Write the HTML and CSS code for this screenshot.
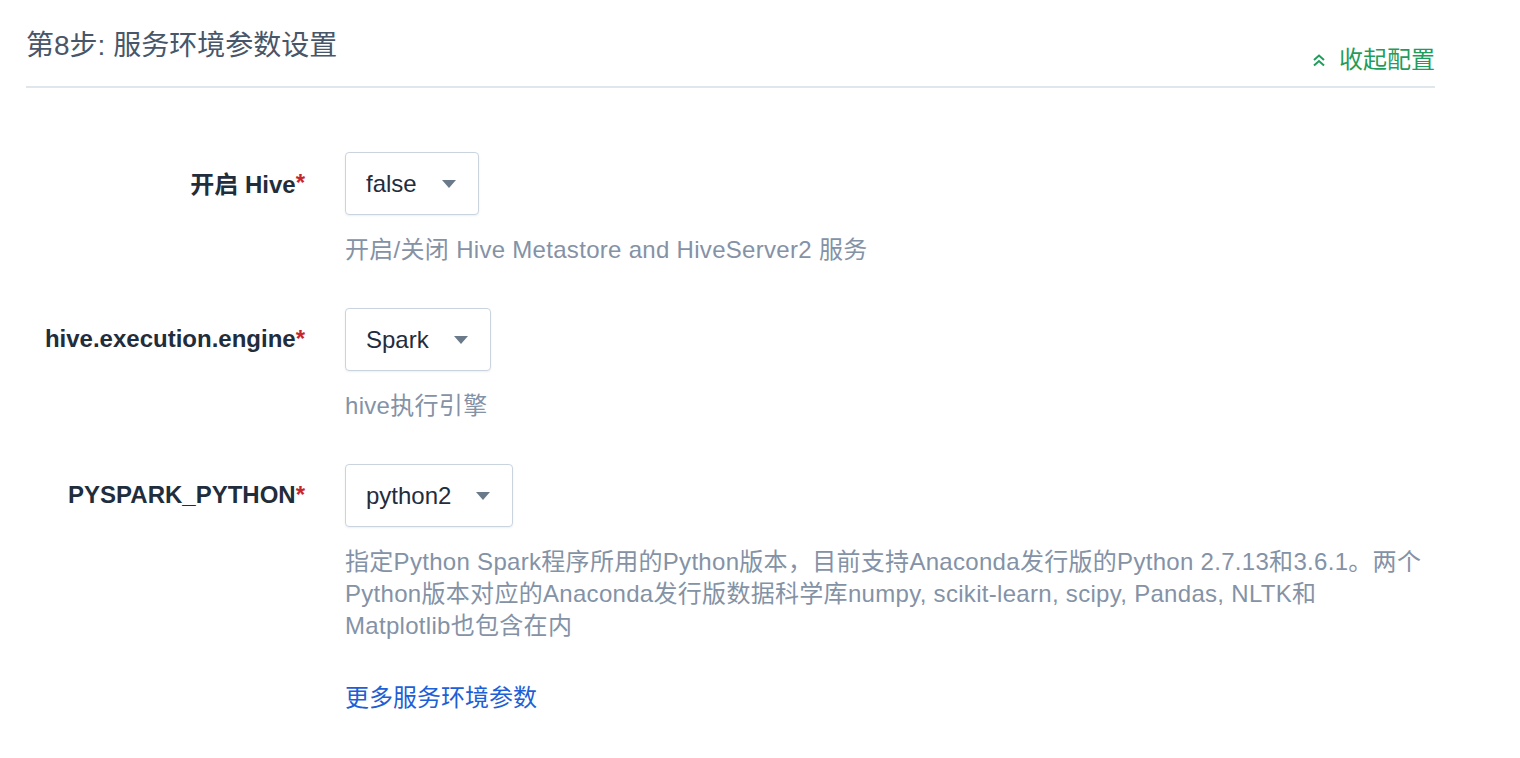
FILE: index.html
```html
<!DOCTYPE html>
<html lang="zh">
<head>
<meta charset="utf-8">
<title>服务环境参数设置</title>
<link rel="stylesheet" href="styles.css">
</head>
<body>
<div class="panel">
  <div class="header">
    <h2 class="title">第8步: 服务环境参数设置</h2>
    <a class="collapse" href="#">
      <svg class="chev" width="14" height="14" viewBox="0 0 14 14"><polyline points="2,7 7,2.5 12,7" fill="none" stroke="currentColor" stroke-width="2"/><polyline points="2,12.5 7,8 12,12.5" fill="none" stroke="currentColor" stroke-width="2"/></svg>
      <span>收起配置</span>
    </a>
  </div>
  <div class="form">
    <div class="row">
      <div class="label">开启 Hive<span class="req">*</span></div>
      <div class="field">
        <div class="select"><span>false</span><i class="caret"></i></div>
        <div class="desc">开启/关闭 Hive Metastore and HiveServer2 服务</div>
      </div>
    </div>
    <div class="row">
      <div class="label">hive.execution.engine<span class="req">*</span></div>
      <div class="field">
        <div class="select"><span>Spark</span><i class="caret"></i></div>
        <div class="desc">hive执行引擎</div>
      </div>
    </div>
    <div class="row">
      <div class="label">PYSPARK_PYTHON<span class="req">*</span></div>
      <div class="field">
        <div class="select"><span>python2</span><i class="caret"></i></div>
        <div class="desc">指定Python Spark程序所用的Python版本，目前支持Anaconda发行版的Python 2.7.13和3.6.1。两个Python版本对应的Anaconda发行版数据科学库numpy, scikit-learn, scipy, Pandas, NLTK和<br>Matplotlib也包含在内</div>
        <a class="more" href="#">更多服务环境参数</a>
      </div>
    </div>
  </div>
</div>
</body>
</html>
```
FILE: styles.css
```css
html, body {
  margin: 0;
  padding: 0;
  background: #ffffff;
}
body {
  font-family: "Liberation Sans", "Noto Sans CJK SC", sans-serif;
  color: #1f2d3d;
}
.panel {
  width: 1409px;
  margin-left: 26px;
}
.header {
  display: flex;
  justify-content: space-between;
  align-items: flex-start;
  padding: 26px 0 6px;
  border-bottom: 2px solid #dfe6ec;
}
.title {
  margin: 0;
  font-size: 28px;
  line-height: 40px;
  font-weight: normal;
  color: #475669;
}
.collapse {
  margin-top: 14px;
  display: flex;
  align-items: center;
  gap: 13px;
  color: #1f9d5c;
  text-decoration: none;
  font-size: 24px;
  line-height: 40px;
}
.chev {
  display: block;
}
.form {
  padding-top: 64px;
}
.row {
  display: flex;
  gap: 40px;
  margin-bottom: 42px;
}
.label {
  width: 279px;
  height: 63px;
  display: flex;
  align-items: center;
  justify-content: flex-end;
  padding-bottom: 2px;
  box-sizing: border-box;
  font-size: 24px;
  font-weight: bold;
  color: #1f2d3d;
  white-space: nowrap;
}
.req {
  color: #c4262d;
}
.field {
  flex: 1;
  min-width: 0;
}
.select {
  display: inline-flex;
  align-items: center;
  box-sizing: border-box;
  height: 63px;
  padding: 0 22px 0 20px;
  border: 1px solid #c9d4df;
  border-radius: 4px;
  box-shadow: 0 1px 2px rgba(31, 45, 61, 0.08);
  font-size: 24px;
  color: #1f2d3d;
}
.caret {
  display: block;
  margin-left: 25px;
  width: 0;
  height: 0;
  border-left: 7px solid transparent;
  border-right: 7px solid transparent;
  border-top: 8px solid #6b7a8b;
}
.desc {
  margin-top: 19px;
  font-size: 24px;
  line-height: 32px;
  letter-spacing: 0.3px;
  color: #8492a6;
}
.more {
  display: inline-block;
  margin-top: 40px;
  font-size: 24px;
  line-height: 32px;
  color: #1d5fd6;
  text-decoration: none;
}
```
